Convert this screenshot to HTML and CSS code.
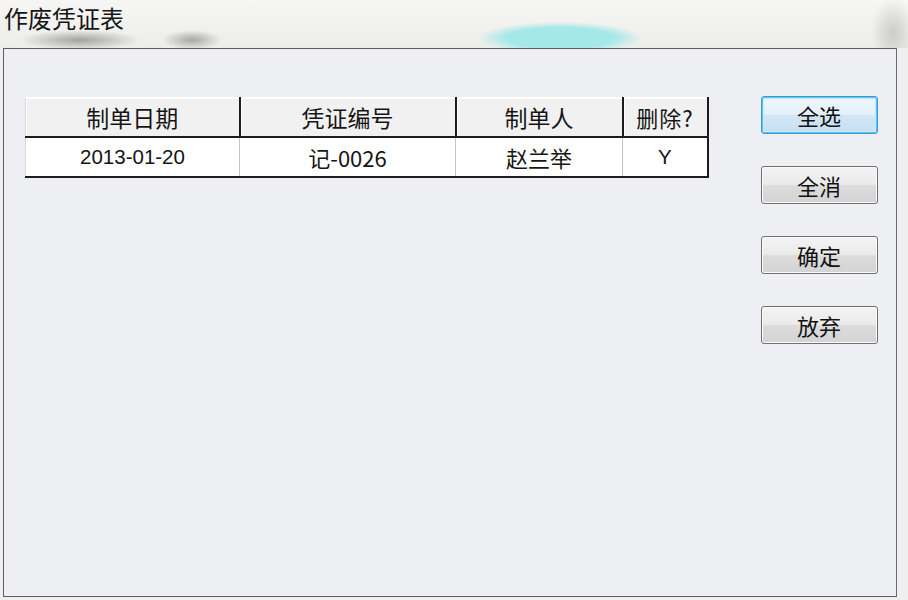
FILE: index.html
```html
<!DOCTYPE html>
<html lang="zh-CN">
<head>
<meta charset="utf-8">
<title>作废凭证表</title>
<link rel="stylesheet" href="styles.css">
</head>
<body>
<div class="titlebar"><span class="title">作废凭证表</span></div>
<div class="panel">
  <table class="grid">
    <colgroup>
      <col class="c1"><col class="c2"><col class="c3"><col class="c4">
    </colgroup>
    <thead>
      <tr><th>制单日期</th><th>凭证编号</th><th>制单人</th><th class="last">删除?</th></tr>
    </thead>
    <tbody>
      <tr><td class="num">2013-01-20</td><td>记-0026</td><td>赵兰举</td><td class="last num">Y</td></tr>
    </tbody>
  </table>
  <div class="buttons">
    <button class="btn focus">全选</button>
    <button class="btn">全消</button>
    <button class="btn">确定</button>
    <button class="btn">放弃</button>
  </div>
</div>
</body>
</html>
```

FILE: styles.css
```css
html, body {
  margin: 0;
  padding: 0;
}
body {
  width: 908px;
  height: 600px;
  overflow: hidden;
  background: #efefed;
  font-family: "Noto Sans CJK SC", "Liberation Sans", sans-serif;
  color: #111;
}
.titlebar {
  height: 48px;
  box-sizing: border-box;
  padding: 2px 0 0 4px;
  background:
    radial-gradient(ellipse 82px 16px at 560px 38px, rgba(160, 232, 232, 0.95) 65%, rgba(160, 232, 232, 0) 100%),
    radial-gradient(ellipse 60px 10px at 80px 40px, rgba(80, 80, 80, 0.48), rgba(80, 80, 80, 0) 100%),
    radial-gradient(ellipse 30px 10px at 192px 40px, rgba(80, 80, 80, 0.45), rgba(80, 80, 80, 0) 100%),
    radial-gradient(ellipse 22px 34px at 893px 32px, rgba(110, 110, 110, 0.28), rgba(110, 110, 110, 0) 100%),
    linear-gradient(#f6f6f4, #ededeb);
}
.title {
  font-size: 24px;
  line-height: 32px;
  color: #161616;
}
.panel {
  margin-left: 3px;
  width: 894px;
  height: 549px;
  box-sizing: border-box;
  border: 1px solid #5e5a6c;
  border-right-color: #6a6678;
  background: #eeeff2;
  display: flex;
  align-items: flex-start;
  padding: 48px 0 0 21px;
}
.grid {
  border-collapse: collapse;
  table-layout: fixed;
  width: 683px;
  border-left: 1px solid #d8d8d8;
}
.c1 { width: 214px; }
.c2 { width: 216px; }
.c3 { width: 167px; }
.c4 { width: 85px; }
.grid th {
  height: 38px;
  padding: 0;
  font-weight: normal;
  font-size: 23px;
  line-height: 30px;
  background: #f1f1f2;
  border-top: 1px solid #ffffff;
  border-right: 2px solid #1c1c1c;
  border-bottom: 2px solid #1c1c1c;
  box-shadow: inset 1px 1px 0 #ffffff;
  color: #151515;
}
.grid th.last {
  font-size: 22px;
  letter-spacing: 1px;
}
.grid td {
  height: 38px;
  padding: 0;
  text-align: center;
  font-size: 22px;
  line-height: 30px;
  background: #ffffff;
  border-right: 1px solid #c4c4c4;
  border-bottom: 2px solid #1c1c1c;
  color: #151515;
}
.grid td.num {
  font-family: "Liberation Sans", "Noto Sans CJK SC", sans-serif;
  font-size: 20.5px;
}
.grid td.last, .grid th.last {
  border-right: 2px solid #1c1c1c;
}
.buttons {
  margin-left: 52px;
  margin-top: -1px;
  display: flex;
  flex-direction: column;
  gap: 32px;
}
.btn {
  width: 117px;
  height: 38px;
  padding: 0;
  border: 1px solid #707070;
  border-radius: 3px;
  background: linear-gradient(#f3f3f3 0%, #ebebeb 48%, #dcdcdc 52%, #d3d3d3 100%);
  box-shadow: inset 0 0 0 1px #fbfbfb;
  font-family: "Noto Sans CJK SC", "Liberation Sans", sans-serif;
  font-size: 22px;
  color: #111;
  line-height: 34px;
}
.btn.focus {
  border: 1px solid #3c9ad8;
  background: linear-gradient(#eef6fc 0%, #e4f0fa 48%, #d2e6f5 52%, #c8e0f2 100%);
  box-shadow: inset 0 0 0 1px #5fc3f2, inset 0 0 0 2px #c4ebfb;
}
```
